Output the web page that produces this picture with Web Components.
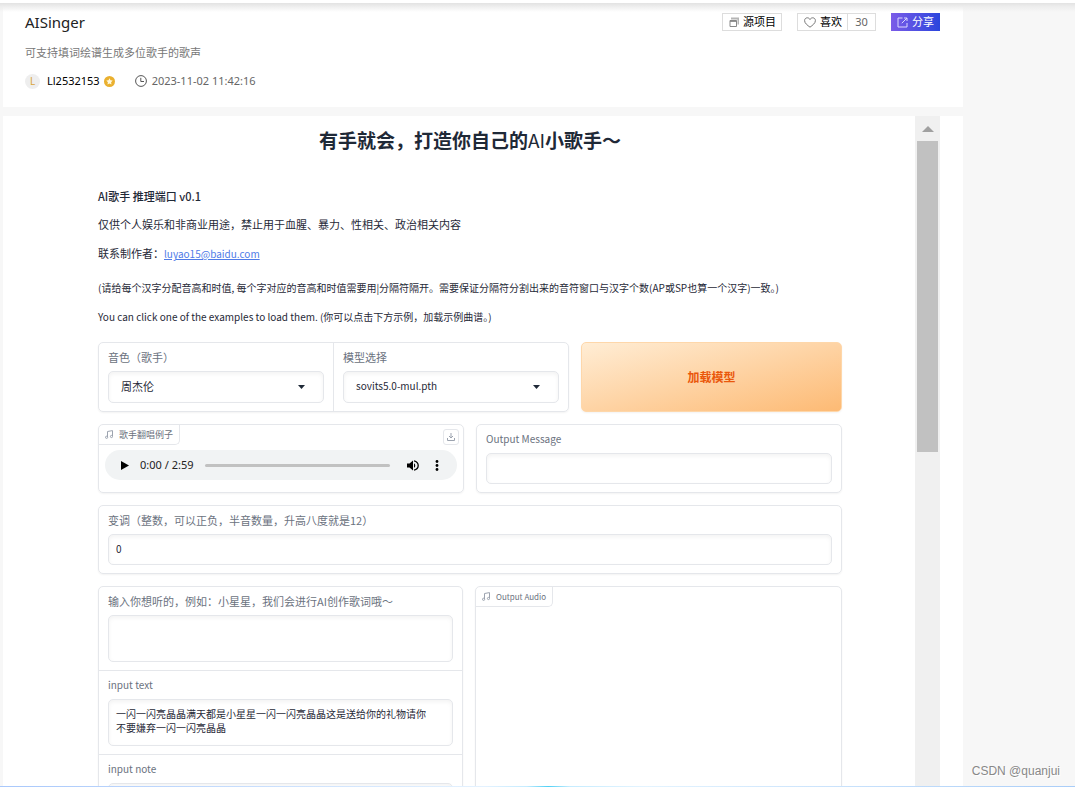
<!DOCTYPE html>
<html lang="zh-CN">
<head>
<meta charset="utf-8">
<meta name="viewport" content="width=device-width, initial-scale=1">
<title>AISinger</title>
<style>
  html, body { margin: 0; height: 100%; }
  body {
    overflow: hidden;
    background: #f7f7f7;
    color: #1f2937;
    font: 10px/14px "Noto Sans CJK SC", sans-serif;
    --line: #e5e7eb;
    --muted: #6b7280;
  }
</style>
</head>
<body>
<singer-page>
  <project-header slot="header" name="AISinger" author="Ll2532153" date="2023-11-02 11:42:16" likes="30">可支持填词绘谱生成多位歌手的歌声</project-header>
  <app-frame>
    <intro-text></intro-text>
    <form-row columns="471fr 261fr">
      <form-panel direction="row">
        <select-field label="音色（歌手）" value="周杰伦"></select-field>
        <select-field label="模型选择" value="sovits5.0-mul.pth"></select-field>
      </form-panel>
      <primary-button>加载模型</primary-button>
    </form-row>
    <form-row columns="1fr 1fr">
      <audio-panel label="歌手翻唱例子" duration="2:59"></audio-panel>
      <form-panel><text-field label="Output Message"></text-field></form-panel>
    </form-row>
    <form-row columns="1fr">
      <form-panel><text-field label="变调（整数，可以正负，半音数量，升高八度就是12）" value="0"></text-field></form-panel>
    </form-row>
    <form-row columns="365fr 367fr">
      <form-panel>
        <text-field multiline label="输入你想听的，例如：小星星，我们会进行AI创作歌词哦～"></text-field>
        <text-field multiline label="input text" value="一闪一闪亮晶晶满天都是小星星一闪一闪亮晶晶这是送给你的礼物请你不要嫌弃一闪一闪亮晶晶"></text-field>
        <text-field multiline label="input note"></text-field>
      </form-panel>
      <audio-panel label="Output Audio"></audio-panel>
    </form-row>
  </app-frame>
  <span slot="watermark">CSDN @quanjui</span>
</singer-page>

<script>
const BASE = `
  *, *::before, *::after { box-sizing: border-box; }
  button, input, select, textarea { font: inherit; color: inherit; margin: 0; }
  svg { display: block; flex: none; }
`;

// Shared base: renders the subclass markup in an open shadow root.
class View extends HTMLElement {
  connectedCallback() {
    if (this.shadowRoot) return;
    this.attachShadow({ mode: "open" }).innerHTML = `<style>${BASE}${this.css()}</style>${this.html()}`;
  }
  attr(name) { return this.getAttribute(name) || ""; }
}

// Labels with Chinese text are set one size larger than Latin ones.
const hasChinese = text => /[\u4e00-\u9fff]/.test(text);
const labelSize = text => hasChinese(text) ? 11 : 10;

customElements.define("singer-page", class extends View {
  css() { return `
    :host { display: grid; grid-template-columns: minmax(0, 1fr) 112px; height: 100vh; padding-left: 3px; position: relative; }
    main { display: flex; flex-direction: column; gap: 9px; min-height: 0; }
    ::slotted(app-frame) { flex: 1; min-height: 0; }
    .top { position: absolute; top: 0; left: 0; right: 0; height: 12px; pointer-events: none;
      background: linear-gradient(#fff 3px, #e2e2e2 3px, #ececec 6px, rgba(247,247,247,0) 12px); }
    .bottom { position: absolute; bottom: 0; left: 0; right: 0; height: 1px;
      background: linear-gradient(90deg, #a9c8fb, #e4f2ff 45%, #c5ecff 49%, #4fd0f5 51%, #c5ecff 53%, #e4f4ff 60%, #a9cdf8); }
    aside { display: flex; align-items: flex-end; justify-content: flex-end; padding: 0 15px 8px 0;
      font: 12px/16px "Liberation Sans", sans-serif; color: #888; text-shadow: 1px 1px 0 #fff; white-space: nowrap; }
  `; }
  html() { return `
    <main><slot name="header"></slot><slot></slot></main>
    <aside><slot name="watermark"></slot></aside>
    <div class="top"></div><div class="bottom"></div>`; }
});

customElements.define("project-header", class extends View {
  css() { return `
    :host { display: flex; justify-content: space-between; align-items: flex-start; background: #fff;
      padding: 10px 23px 17px 22px; font: 11px/18px "Noto Sans", "Noto Sans CJK SC", sans-serif; color: #666; }
    h1 { margin: 0; font-size: 15px; line-height: 24px; font-weight: 400; color: #222; }
    p { margin: 9px 0 11px; color: #777; font-family: "Noto Sans CJK SC", sans-serif; }
    .meta, .actions, .user, .time { display: flex; align-items: center; }
    .meta { gap: 20px; }
    .user { color: #000; gap: 4px; }
    .avatar { width: 15px; height: 15px; border-radius: 50%; background: #eee; color: #d9a43a;
      font-size: 10px; line-height: 15px; text-align: center; margin-right: 3px; }
    .time { gap: 5px; }
    .actions { gap: 15px; padding-top: 3px; }
    .group { display: flex; border: 1px solid #ddd; }
    button { display: flex; align-items: center; justify-content: center; gap: 4px; height: 16px; padding: 0 5px 0 6px;
      border: 0; background: #fff; color: #000; line-height: 16px; white-space: nowrap; }
    .count { border-left: 1px solid #ddd; color: #666; width: 28px; padding: 0; }
    .share { height: 18px; background: linear-gradient(90deg, #7b5ce8, #2b45dd); color: #fff; padding: 0 6px; }
  `; }
  html() { return `
    <div>
      <h1>${this.attr("name")}</h1>
      <p><slot></slot></p>
      <div class="meta">
        <span class="user"><span class="avatar">L</span>${this.attr("author")}
          <svg width="11" height="11" viewBox="0 0 11 11"><circle cx="5.5" cy="5.5" r="5.5" fill="#eab02f"/><path d="M5.5 2.3l1 2 2.2.3-1.6 1.6.4 2.2-2-1-2 1 .4-2.2-1.6-1.6 2.2-.3z" fill="#fff8dd"/></svg>
        </span>
        <span class="time">
          <svg width="12" height="12" viewBox="0 0 12 12" fill="none" stroke="#555"><circle cx="6" cy="6" r="5.4"/><path d="M5.8 2.8v3.7h3.2"/></svg>
          <time>${this.attr("date")}</time>
        </span>
      </div>
    </div>
    <div class="actions">
      <div class="group"><button type="button">
        <svg width="10" height="10" viewBox="0 0 10 10"><path d="M2 1.5h7.500v6" fill="none" stroke="#b5b5b5" stroke-width="2"/><path d="M1 3.500h6.500v6H1z" fill="#fff" stroke="#888"/><path d="M1 4.200h6.500" stroke="#888" stroke-width="1.400"/></svg>源项目</button></div>
      <div class="group"><button type="button">
        <svg width="12" height="11" viewBox="0 0 12 11"><path d="M6 10.2C3.5 8.3.6 6.3.6 3.6.6 1.9 1.8.8 3.3.8 4.500.8 5.500 1.500 6 2.500 6.500 1.500 7.500.8 8.700.8c1.500 0 2.700 1.100 2.700 2.800 0 2.700-2.900 4.700-5.400 6.600z" fill="none" stroke="#777"/></svg>喜欢</button>
        <button type="button" class="count">${this.attr("likes")}</button></div>
      <button type="button" class="share">
        <svg width="11" height="11" viewBox="0 0 11 11" fill="none" stroke="#ddd8ff"><path d="M5.500 1H1v9h9V6M7 1h3v3M10 1L4.800 6.200"/></svg>分享</button>
    </div>`; }
});

customElements.define("app-frame", class extends View {
  css() { return `
    :host { display: flex; background: #fff; padding-right: 23px; overflow: hidden; }
    .content { flex: 1; min-width: 0; display: flex; flex-direction: column; gap: 12px; padding: 11px 73px 0 95px; }
    .track { width: 25px; background: #f0f0f0; display: flex; flex-direction: column; align-items: center; gap: 9px; padding: 10px 2px 0; }
    .thumb { width: 100%; height: 47%; background: #c1c1c1; }
  `; }
  html() { return `
    <div class="content"><slot></slot></div>
    <div class="track" aria-hidden="true">
      <svg width="12" height="6" viewBox="0 0 12 6"><path d="M0 6L6 0l6 6z" fill="#a0a0a0"/></svg>
      <div class="thumb"></div>
    </div>`; }
});

customElements.define("intro-text", class extends View {
  css() { return `
    :host { display: block; white-space: nowrap; }
    h1 { margin: 0 0 35px; font-size: 19px; line-height: 26px; font-weight: 700; text-align: center; }
    h1 span { font-weight: 400; }
    h2 { margin: 0 0 12px; font-size: 11px; line-height: 16px; font-weight: 500; }
    p { margin: 0 0 13px; line-height: 16px; }
    p.cjk { font-size: 11px; }
    .contact { margin-bottom: 18px; }
    p:last-child { margin-bottom: 5px; }
    a { color: #4f7be8; font-size: 10px; }
  `; }
  html() { return `
    <h1>有手就会，打造你自己的<span>AI</span>小歌手～</h1>
    <h2>AI歌手 推理端口 v0.1</h2>
    <p class="cjk">仅供个人娱乐和非商业用途，禁止用于血腥、暴力、性相关、政治相关内容</p>
    <p class="cjk contact">联系制作者：<a href="mailto:luyao15@baidu.com">luyao15@baidu.com</a></p>
    <p>(请给每个汉字分配音高和时值, 每个字对应的音高和时值需要用|分隔符隔开。需要保证分隔符分割出来的音符窗口与汉字个数(AP或SP也算一个汉字)一致。)</p>
    <p>You can click one of the examples to load them. (你可以点击下方示例，加载示例曲谱。)</p>`; }
});

customElements.define("form-row", class extends View {
  css() { return `:host { display: grid; grid-template-columns: ${this.attr("columns")}; gap: 12px; }`; }
  html() { return `<slot></slot>`; }
});

customElements.define("form-panel", class extends View {
  css() {
    const row = this.attr("direction") === "row";
    return `
    :host { display: flex; flex-direction: ${row ? "row" : "column"}; min-width: 0; border: 1px solid var(--line);
      border-radius: 5px; box-shadow: 0 1px 2px rgba(0,0,0,.05); }
    ::slotted(*) { ${row ? "flex: 1;" : ""} min-width: 0; }
    ::slotted(:not(:first-child)) { border-${row ? "left" : "top"}: 1px solid var(--line); }`;
  }
  html() { return `<slot></slot>`; }
});

const FIELD = `
  :host { display: block; padding: 7px 9px 8px; }
  label { display: block; margin-bottom: 7px; color: var(--muted); line-height: 14px; white-space: nowrap; }
  input, select, textarea { display: block; width: 100%; border: 1px solid var(--line); border-radius: 5px;
    background: #fff; outline: 0; box-shadow: inset 0 2px 4px rgba(0,0,0,.05); }
`;

customElements.define("select-field", class extends View {
  css() { return FIELD + `
    label { font-size: ${labelSize(this.attr("label"))}px; }
    .box { display: grid; align-items: center; }
    select, svg { grid-area: 1 / 1; }
    select { appearance: none; height: 32px; padding: 0 24px 2px 12px; font-size: ${labelSize(this.attr("value"))}px; }
    svg { justify-self: end; margin-right: 19px; pointer-events: none; }
  `; }
  html() { return `
    <label for="control">${this.attr("label")}</label>
    <div class="box">
      <select id="control"><option>${this.attr("value")}</option></select>
      <svg width="7" height="4" viewBox="0 0 7 4"><path d="M0 0h7L3.500 4z" fill="#1f2937"/></svg>
    </div>`; }
});

customElements.define("text-field", class extends View {
  css() { return FIELD + `
    label { font-size: ${labelSize(this.attr("label"))}px; }
    input { height: 31px; padding: 0 7px 2px; }
    textarea { height: 47px; padding: 7px 20px 7px 7px; resize: none; overflow: hidden; line-height: 14px; }
  `; }
  html() {
    const control = this.hasAttribute("multiline")
      ? `<textarea id="control">${this.attr("value")}</textarea>`
      : `<input id="control" type="text" value="${this.attr("value")}">`;
    return `<label for="control">${this.attr("label")}</label>${control}`;
  }
});

customElements.define("primary-button", class extends View {
  css() { return `
    :host { display: grid; }
    button { border: 1px solid #fed7aa; border-radius: 5px; background: linear-gradient(to bottom right, #ffedd5, #fdba74);
      color: #ea580c; font-size: 12px; font-weight: 600; box-shadow: 0 1px 2px rgba(0,0,0,.05); }
  `; }
  html() { return `<button type="button"><slot></slot></button>`; }
});

customElements.define("audio-panel", class extends View {
  css() { return `
    :host { display: block; min-width: 0; border: 1px solid var(--line); border-radius: 5px; box-shadow: 0 1px 2px rgba(0,0,0,.05); }
    .head { display: flex; justify-content: space-between; height: 19px; }
    .tag { display: flex; align-items: center; gap: 6px; height: 20px; padding: 0 6px; color: var(--muted);
      font-size: ${hasChinese(this.attr("label")) ? 9 : 8}px; line-height: 12px; border: solid var(--line); border-width: 0 1px 1px 0; border-radius: 5px 0 5px 0; white-space: nowrap; }
    button { display: grid; place-items: center; padding: 0; border: 0; background: none; }
    .save { width: 16px; height: 16px; margin: 4px 4px 0 0; border: 1px solid var(--line); border-radius: 3px; }
    .player { display: flex; align-items: center; height: 30px; margin: 6px; padding: 0 18px 0 16px; border-radius: 15px; background: #f1f3f4;
      color: #222; font: 11px/16px "Noto Sans", sans-serif; }
    .play { margin-right: 11px; }
    input { appearance: none; flex: 1; min-width: 0; height: 3px; margin: 0 17px 0 12px; border-radius: 2px; background: #c1c1c1; }
    input::-webkit-slider-thumb { appearance: none; width: 0; height: 0; }
    .more { margin-left: 16px; }
  `; }
  html() {
    const duration = this.attr("duration");
    return `
    <div class="head">
      <span class="tag">
        <svg width="8" height="9" viewBox="0 0 8 9" fill="none" stroke="#9ca3af"><path d="M2.500 7V1.500L7.500.6v5.600"/><circle cx="1.600" cy="7.300" r="1.100"/><circle cx="6.500" cy="6.500" r="1.100"/></svg>
        ${this.attr("label")}</span>
      ${duration ? `<button type="button" class="save" aria-label="Download">
        <svg width="8" height="8" viewBox="0 0 8 8" fill="none" stroke="#9ca3af"><path d="M4 0v5M2 3l2 2 2-2M.5 5v2.500h7V5"/></svg></button>` : ""}
    </div>
    ${duration ? `<div class="player">
      <button type="button" class="play" aria-label="Play"><svg width="8" height="9" viewBox="0 0 8 9"><path d="M0 0l8 4.500L0 9z"/></svg></button>
      <span>0:00 / ${duration}</span>
      <input type="range" min="0" max="179" value="0" aria-label="Seek">
      <button type="button" aria-label="Volume"><svg width="12" height="11" viewBox="0 0 12 11"><path d="M0 3.500h2.500L6 .5v10L2.500 7.500H0z"/><path d="M7 3.200c1.700.8 1.700 3.800 0 4.600z"/><path d="M7 .8c5.600 1.300 5.600 8.100 0 9.400" fill="none" stroke="#000" stroke-width="1.300"/></svg></button>
      <button type="button" class="more" aria-label="More"><svg width="4" height="11" viewBox="0 0 4 11"><circle cx="2" cy="1.500" r="1.400"/><circle cx="2" cy="5.500" r="1.400"/><circle cx="2" cy="9.500" r="1.400"/></svg></button>
    </div>` : ""}`;
  }
});
</script>
</body>
</html>
